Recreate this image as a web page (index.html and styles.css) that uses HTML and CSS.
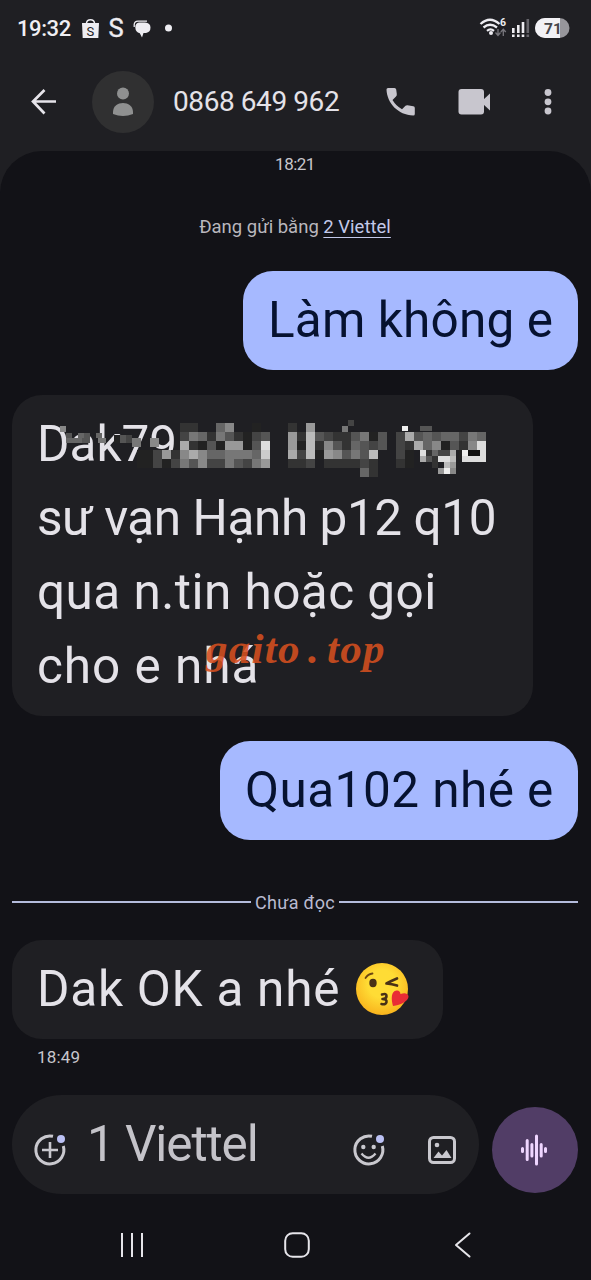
FILE: index.html
```
<!DOCTYPE html>
<html lang="vi">
<head>
<meta charset="utf-8">
<title>0868 649 962</title>
<link rel="stylesheet" href="styles.css">
</head>
<body>
<div class="phone">
  <header class="top">
    <div class="status">
      <span class="clock">19:32</span>
      <svg class="status-left" width="90" height="26" viewBox="82 15 90 26">
        <path d="M82 23H99L98.3 38H82.7Z" fill="#eeedf2"/>
        <path d="M86.5 23C87 18.5 94 18.5 94.500 23" fill="none" stroke="#eeedf2" stroke-width="1.5"/>
        <text x="86.500" y="35.500" font-size="13" fill="#222126">S</text>
        <text x="108.500" y="37" font-size="25.500" fill="#eeedf2" stroke="#eeedf2" stroke-width=".4">S</text>
        <path d="M134.200 27V24.500Q134.500 21.200 138 21.200H147" fill="none" stroke="#eeedf2" stroke-width="1.300"/>
        <path d="M139 22.500H145Q150.500 23 150.500 27.500T146 33H143.500L142 37.500L139.800 33.200Q135.500 32 135.300 27.500Q135.300 23 139 22.500Z" fill="#eeedf2"/>
        <circle cx="168.500" cy="28" r="3.500" fill="#eeedf2"/>
      </svg>
      <svg class="status-right" width="92" height="24" viewBox="479 16 92 24">
        <g fill="none" stroke="#eeedf2" stroke-width="2.300">
          <path d="M480.500 24Q490 15.500 499.500 24"/><path d="M483.500 27.500Q490 22 497 27.500"/><path d="M487 30.800Q490.500 28 494 30.800"/>
        </g>
        <circle cx="491" cy="33" r="2" fill="#eeedf2"/>
        <text x="500" y="26" font-size="10.500" font-weight="700" fill="#eeedf2">6</text>
        <path d="M498 29V35M495.500 32.500L498 35.500L500.500 32.500M503.300 36V30M500.800 32L503.300 29.200L505.800 32" fill="none" stroke="#77767c" stroke-width="1.300"/>
        <g fill="#eeedf2"><rect x="512" y="28" width="2.600" height="5"/><rect x="517" y="25" width="2.600" height="8"/><rect x="521.700" y="22" width="2.600" height="11"/><rect x="512" y="34.500" width="2.600" height="2.500"/><rect x="517" y="34.500" width="2.600" height="2.500"/><rect x="521.700" y="34.500" width="2.600" height="2.500"/></g>
        <g fill="#66656b"><rect x="526.500" y="19" width="2.600" height="14"/><rect x="526.500" y="34.500" width="2.600" height="2.500"/></g>
        <rect x="535" y="18" width="34.500" height="20" rx="10" fill="#97969b"/>
        <path d="M560 18V38H545A10 10 0 0 1 545 18Z" fill="#f2f1f5"/>
        <text x="544" y="33.500" font-size="15.500" font-weight="700" fill="#46454a">71</text>
      </svg>
    </div>
    <div class="appbar">
      <svg class="back" width="26" height="26" viewBox="30 89 26 26" fill="none" stroke="#e6e4ea" stroke-width="2.700"><path d="M56 101.500H33M44.500 90L33 101.500L44.500 113.500"/></svg>
      <div class="avatar"><svg width="22" height="30" viewBox="0 0 22 30" fill="#8f9090"><circle cx="11" cy="6.500" r="6"/><path d="M1 27V25C1 13 21 13 21 25V27Q11 31 1 27Z"/></svg></div>
      <h1 class="title">0868 649 962</h1>
      <svg class="actions" width="170" height="30" viewBox="385 87 170 30" fill="#c8c6ce">
        <path d="M388 88H394.500Q396 88 396.200 89.500L396.800 94Q397 95.500 396 96.500L392.500 100Q396 106 402 109.200L405.500 105.700Q406.500 105 407.500 105.200L413.300 106.300Q414.800 106.600 414.800 108V114Q414.800 115.500 413.300 115.500C398 115 387 103 386.500 89.500Q386.500 88 388 88Z"/>
        <rect x="458.500" y="89" width="25.500" height="25.500" rx="3"/><path d="M483 100L490 93.500V110.500L483 104Z"/>
        <circle cx="548" cy="92.500" r="3.400"/><circle cx="548" cy="101.800" r="3.400"/><circle cx="548" cy="111" r="3.400"/>
      </svg>
    </div>
  </header>

  <main class="thread">
    <time class="stamp-top">18:21</time>
    <p class="sim-note">Đang gửi bằng <a class="sim-link">2 Viettel</a></p>
    <div class="bubble sent b1"><span>Làm không e</span></div>
    <div class="bubble received b2">
      <span class="l1">Dak79</span><span class="l2">sư vạn Hạnh p12 q10</span><span class="l3">qua n.tin hoặc gọi</span><span class="l4">cho e nhá</span>
      <svg class="mosaic" id="mosaic" width="460" height="70" viewBox="40 415 460 70" shape-rendering="crispEdges"></svg>
      <div class="watermark">gaito<i class="dot">.</i>top</div>
    </div>
    <div class="bubble sent b3"><span>Qua102 nhé e</span></div>
    <div class="unread"><span>Chưa đọc</span></div>
    <div class="bubble received b4"><span>Dak OK a nhé</span>
      <svg class="emoji" width="56" height="54" viewBox="0 0 56 54">
        <defs><radialGradient id="face" cx=".5" cy=".4" r=".6"><stop offset=".45" stop-color="#ffdc35"/><stop offset="1" stop-color="#f9b41d"/></radialGradient></defs>
        <circle cx="27" cy="26" r="26" fill="url(#face)"/>
        <ellipse cx="18" cy="20" rx="3.700" ry="4.200" fill="#493116"/>
        <path d="M10.500 15Q13 11 17.500 10.500" fill="none" stroke="#6d4712" stroke-width="1.800" stroke-linecap="round"/>
        <path d="M42 15.500Q36 18 31.500 20.500Q37 21 42 22.500" fill="none" stroke="#493116" stroke-width="2.700" stroke-linecap="round" stroke-linejoin="round"/>
        <path d="M27 31.500Q31.500 30 31.500 33T27.500 36Q32 36 31.500 39T26.500 41" fill="none" stroke="#493116" stroke-width="2.600" stroke-linecap="round" stroke-linejoin="round"/>
        <path d="M38 43C36 36 36 28 41.500 27.500Q45 27 45.500 31Q52 29 53.500 33C54 38 46 42 38 43Z" fill="#e92c35"/>
      </svg>
    </div>
    <time class="stamp-bottom">18:49</time>
  </main>

  <footer class="composer">
    <div class="field">
      <svg width="34" height="34" viewBox="0 0 34 34" fill="none" stroke="#c9c8ce" stroke-width="3"><path d="M20 3.300A14 14 0 1 0 30.300 13"/><path d="M9 17H25M17 9V25" stroke-width="2.600"/><circle cx="28" cy="6" r="4" fill="#bbc1f4" stroke="none"/></svg>
      <span class="placeholder">1 Viettel</span>
      <svg class="smile" width="34" height="34" viewBox="0 0 34 34" fill="none" stroke="#c9c8ce" stroke-width="3"><path d="M20 3.300A14 14 0 1 0 30.300 13"/><circle cx="11.300" cy="14" r="2.200" fill="#c9c8ce" stroke="none"/><circle cx="21.700" cy="14" r="2.200" fill="#c9c8ce" stroke="none"/><path d="M9.500 20.500Q16.500 29 23.500 20.500" stroke-width="2.300"/><circle cx="28" cy="6" r="4" fill="#bbc1f4" stroke="none"/></svg>
      <svg class="picture" width="30" height="30" viewBox="0 0 30 30" fill="#c9c8ce"><rect x="2.500" y="2.500" width="25" height="25" rx="4" fill="none" stroke="#c9c8ce" stroke-width="3"/><circle cx="10" cy="10" r="2.300"/><path d="M6.500 23L11.500 16.500L15 20.500L19.500 15L24.500 23Z"/></svg>
    </div>
    <div class="voice"><svg width="28" height="32" viewBox="0 0 28 32" stroke="#efd6ff" stroke-width="3" stroke-linecap="round"><path d="M2.500 14.500V17.500M7.200 6.500V25.500M11.900 10.500V22M16.500 2V30M21.200 10.500V22M25.500 14.500V17.500"/></svg></div>
  </footer>
  <nav class="nav">
    <svg width="24" height="26" viewBox="0 0 24 26" fill="none" stroke="#e6e5ea" stroke-width="2"><path d="M2 1V25M12 1V25M22 1V25"/></svg>
    <svg width="26" height="26" viewBox="0 0 26 26" fill="none" stroke="#e6e5ea" stroke-width="2"><rect x="1.200" y="1.200" width="23.600" height="23.600" rx="7.500"/></svg>
    <svg width="18" height="26" viewBox="0 0 18 26" fill="none" stroke="#e6e5ea" stroke-width="2" stroke-linecap="round" stroke-linejoin="round"><path d="M15.500 1.500L2 13L15.500 24.500"/></svg>
  </nav>
</div>
<script src="mosaic.js"></script>
</body>
</html>
```
FILE: styles.css
```
* { box-sizing: border-box; }
body { margin: 0; background: #121217; font-family: Roboto, "Noto Sans", sans-serif; color: #e4e2e8; }
.phone { width: 591px; height: 1280px; display: flex; flex-direction: column; background: #121217; overflow: hidden; }
.top { height: 151px; background: #1f1f23; flex: none; }
.status { height: 56px; display: flex; align-items: center; padding: 0 20px 0 17px; }
.status svg { overflow: visible; }
.clock { width: 65px; font-size: 22px; font-weight: 500; letter-spacing: -0.4px; color: #f0eff4; }
.status-right { margin-left: auto; }
.appbar { display: flex; height: 91px; align-items: center; padding-left: 30px; }
.avatar { width: 62px; height: 62px; margin-left: 36px; border-radius: 50%; background: #303031; display: grid; place-items: center; }
.title { margin: 0 0 0 19px; width: 212px; font-size: 28px; font-weight: 400; letter-spacing: -0.42px; white-space: nowrap; }
.thread { height: 943px; flex: none; padding: 2px 13px 0 12px; display: flex; flex-direction: column; border-radius: 42px 42px 0 0; background: #121217; box-shadow: 0 -45px 0 45px #1f1f23; clip-path: inset(0); }
.stamp-top { height: 22px; line-height: 22px; text-align: center; font-size: 17px; letter-spacing: -0.5px; color: #c8c6cc; }
.sim-note { margin: 41px 0 0; height: 24px; line-height: 22px; font-size: 18.5px; text-align: center; color: #b9b7bd; white-space: nowrap; }
.sim-link { color: #c3c9ea; text-decoration: underline; text-underline-offset: 4px; }
.bubble { flex: none; border-radius: 30px; padding: 12px 25px 14px; font-size: 49.5px; line-height: 74px; white-space: nowrap; }
.bubble span { display: block; width: max-content; }
.sent { align-self: flex-end; background: #a6b9ff; color: #061230; height: 99px; }
.received { align-self: flex-start; background: #1f1f23; }
.b1 { width: 335px; margin-top: 31px; letter-spacing: 0.15px; }
.b2 { position: relative; width: 521px; height: 321px; margin-top: 25px; }
.l2 { letter-spacing: -0.43px; }
.l3 { letter-spacing: 0.46px; }
.l4 { letter-spacing: 0.95px; }
.mosaic { position: absolute; left: 28px; top: 20px; }
.watermark { position: absolute; left: 194px; top: 226px; font: italic 700 43px/56px "Liberation Serif", serif; letter-spacing: 1.3px; color: #d64f1f; opacity: .88; }
.dot { padding: 0 7px; }
.b3 { width: 358px; margin-top: 25px; letter-spacing: 0.45px; }
.unread { margin-top: 49px; height: 26px; display: flex; align-items: center; gap: 4px; font-size: 18px; letter-spacing: 0.3px; color: #b9bad0; white-space: nowrap; }
.unread::before, .unread::after { content: ""; flex: 1; height: 2px; background: #b4bcdc; }
.b4 { display: flex; width: 431px; height: 99px; margin-top: 25px; letter-spacing: 0.75px; }
.emoji { margin: 11px 0 0 15px; flex: none; }
.stamp-bottom { margin: 7px 0 0 25px; line-height: 22px; font-size: 17px; letter-spacing: 0.2px; color: #c8c6cc; }
.composer { display: flex; height: 100px; flex: none; align-items: flex-start; padding: 1px 13px 0 12px; }
.field { width: 467px; height: 99px; border-radius: 50px; background: #1f1f23; display: flex; align-items: center; padding: 11px 22px 0 21px; }
.placeholder { margin: -13px 0 0 20px; width: 265px; font-size: 49.5px; letter-spacing: -1.1px; line-height: 70px; white-space: nowrap; color: #c4c3c9; }
.picture { margin-left: 41px; }
.voice { width: 86px; height: 86px; margin: 12px 0 0 13px; flex: none; border-radius: 50%; background: #513d66; display: grid; place-items: center; padding-right: 3px; }
.nav { display: flex; padding: 38px 118px 0 120px; }
.nav svg:nth-child(2) { margin-left: 140px; }
.nav svg:nth-child(3) { margin-left: 144px; }
```
FILE: mosaic.js
```
// Each block: x, y, cell width, cell height, then one gray level (hex digit) per cell; "-" is empty.
const blocks = [
  [60, 426, 6, 6, "8"],
  [66, 433, 6, 5, "5-65-6"],
  [66, 438, 8, 5, "665-7-43-"],
  [114, 435, 6, 8, "254"],
  [132, 438, 9, 9, "7-8"],
  [180, 423, 9, 9, "33--68--2-"],
  [180, 432, 9, 9, "4763753245"],
  [180, 441, 9, 9, "a32529925d"],
  [137, 450, 8, 9, "22222"],
  [137, 459, 8, 9, "22222"],
  [153, 450, 9, 9, "493"],
  [180, 450, 9, 9, "8a8667776c"],
  [153, 459, 9, 9, "4247584475479"],
  [288, 423, 9, 9, "3-9"],
  [342, 426, 6, 6, "7"],
  [348, 420, 6, 6, "4"],
  [288, 432, 9, 9, "93b54335725"],
  [288, 441, 9, 9, "92b38536545"],
  [288, 450, 9, 9, "a4b298575b"],
  [288, 459, 9, 9, "334-333343"],
  [360, 468, 9, 9, "63"],
  [402, 426, 6, 5, "e--55"],
  [396, 432, 9, 9, "4a56566476"],
  [396, 441, 9, 9, "43a682538d"],
  [396, 450, 9, 9, "42-----2-d"],
  [420, 450, 6, 6, "d3644a-e11d"],
  [420, 456, 6, 6, "a53ddb-dddd"],
  [396, 459, 9, 9, "32"],
  [432, 462, 6, 6, "3-b9"],
  [438, 468, 6, 6, "9e8"]
];
const svg = document.getElementById("mosaic");
for (const [x, y, w, h, cells] of blocks) {
  [...cells].forEach((c, i) => {
    if (c === "-") return;
    const r = document.createElementNS("http://www.w3.org/2000/svg", "rect");
    r.setAttribute("x", x + i * w);
    r.setAttribute("y", y);
    r.setAttribute("width", w);
    r.setAttribute("height", h);
    r.setAttribute("fill", "#" + c + c + c);
    svg.appendChild(r);
  });
}
```
